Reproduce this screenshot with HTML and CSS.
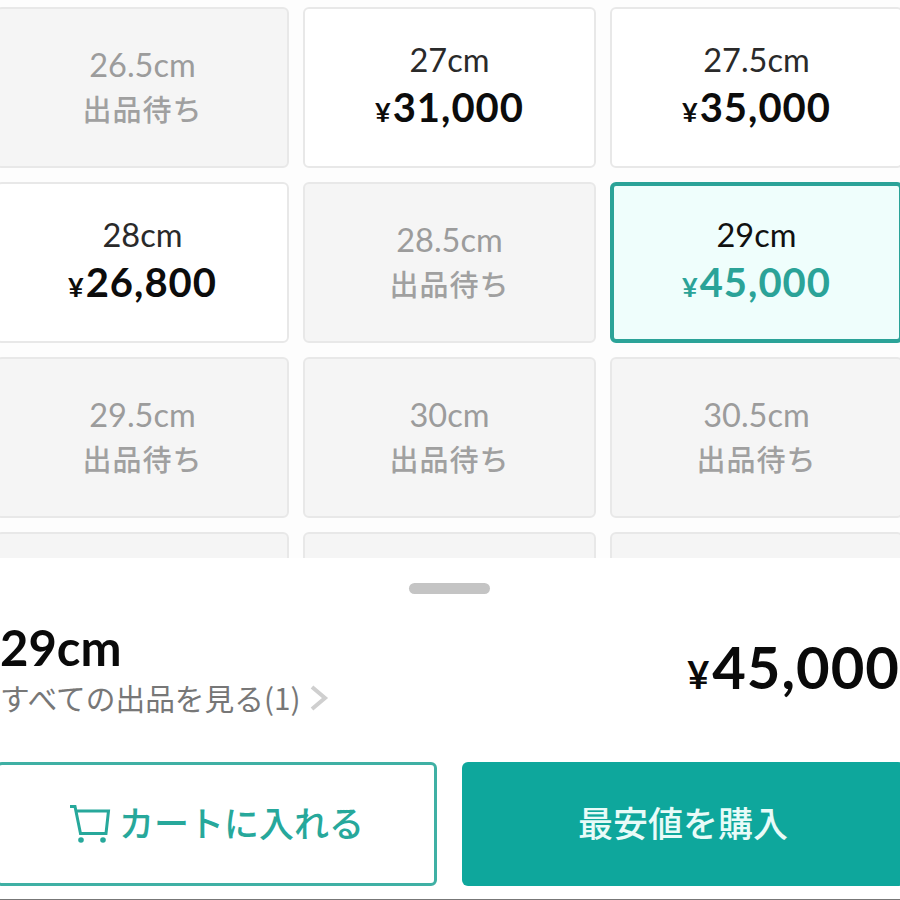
FILE: index.html
```html
<!DOCTYPE html>
<html lang="ja">
<head>
<meta charset="utf-8">
<title>サイズ選択</title>
<link rel="stylesheet" href="styles.css">
</head>
<body>
<div class="page">
  <div class="grid-area">
    <div class="grid">
      <div class="card off"><div class="size">26.5cm</div><div class="wait">出品待ち</div></div>
      <div class="card"><div class="size">27cm</div><div class="price"><span class="yen">¥</span>31,000</div></div>
      <div class="card"><div class="size">27.5cm</div><div class="price"><span class="yen">¥</span>35,000</div></div>
      <div class="card"><div class="size">28cm</div><div class="price"><span class="yen">¥</span>26,800</div></div>
      <div class="card off"><div class="size">28.5cm</div><div class="wait">出品待ち</div></div>
      <div class="card selected"><div class="size">29cm</div><div class="price"><span class="yen">¥</span>45,000</div></div>
      <div class="card off"><div class="size">29.5cm</div><div class="wait">出品待ち</div></div>
      <div class="card off"><div class="size">30cm</div><div class="wait">出品待ち</div></div>
      <div class="card off"><div class="size">30.5cm</div><div class="wait">出品待ち</div></div>
      <div class="card off"></div>
      <div class="card off"></div>
      <div class="card off"></div>
    </div>
  </div>
  <div class="sheet">
    <div class="handle"></div>
    <div class="summary">
      <div class="summary-left">
        <div class="sel-size">29cm</div>
        <div class="all-link">すべての出品を見る(1)
          <svg class="chev" width="20" height="28" viewBox="0 0 20 28" aria-hidden="true"><path d="M3 3 L16 14 L3 25" fill="none" stroke="#cfcfcf" stroke-width="4"/></svg>
        </div>
      </div>
      <div class="sel-price"><span class="yen-lg">¥</span>45,000</div>
    </div>
    <div class="actions">
      <div class="btn btn-cart">
        <svg class="cart" width="42" height="42" viewBox="0 0 42 42" aria-hidden="true"><path d="M1 3.5 H6 L11.5 30.5 H37 L39.5 8 H7" fill="none" stroke="#27a89b" stroke-width="3"/><circle cx="12" cy="37" r="2.8" fill="#27a89b"/><circle cx="34" cy="37" r="2.8" fill="#27a89b"/></svg>
        <span>カートに入れる</span>
      </div>
      <div class="btn btn-buy">最安値を購入</div>
    </div>
  </div>
</div>
</body>
</html>
```
FILE: styles.css
```css
* { box-sizing: border-box; }
html, body { margin: 0; padding: 0; background: #fff; }
body { font-family: "Lato", "Noto Sans CJK JP", sans-serif; color: #111; }
.page { width: 900px; height: 900px; overflow: hidden; display: flex; flex-direction: column; border-bottom: 1px solid #777; }
.grid-area { height: 558px; overflow: hidden; background: #fdfdfd; flex: none; }
.grid { display: grid; grid-template-columns: repeat(3, 293px); grid-auto-rows: 161px; gap: 14px; margin-left: -4px; padding-top: 7px; }
.card { background: #fff; border: 2px solid #e8e8e8; border-radius: 6px; display: flex; flex-direction: column; align-items: center; justify-content: center; }
.size { font-size: 32.5px; line-height: 40px; color: #2a2a2a; }
.price { font-size: 40px; line-height: 48px; font-weight: 700; color: #0c0c0c; letter-spacing: 1px; margin-top: 3px; }
.yen { font-size: 27px; font-weight: 700; margin-right: 1px; }
.wait { font-size: 29px; line-height: 44px; font-weight: 500; color: #a0a0a0; font-family: "Noto Sans CJK JP", sans-serif; letter-spacing: 1px; margin-top: 1px; }
.off { background: #f5f5f5; }
.off .size { color: #9c9c9c; }
.selected { background: #effefc; border: 4px solid #2ba398; }
.selected .size { color: #111; }
.selected .price { color: #2ba398; }
.sheet { flex: 1; background: #fff; display: flex; flex-direction: column; }
.handle { width: 81px; height: 11px; border-radius: 6px; background: #c4c4c4; margin: 25px 0 0 409px; flex: none; }
.summary { display: flex; justify-content: space-between; align-items: flex-start; margin-top: 28px; height: 140px; }
.sel-size { font-size: 49px; line-height: 50px; font-weight: 700; color: #0a0a0a; }
.all-link { display: flex; align-items: center; gap: 9px; font-size: 29.7px; line-height: 40px; color: #777; margin-top: 6px; font-family: "Noto Sans CJK JP", sans-serif; }
.sel-price { font-size: 58px; line-height: 68px; font-weight: 700; color: #0a0a0a; letter-spacing: 1px; margin-top: 11px; }
.yen-lg { font-size: 38px; margin-right: 2px; }
.actions { display: grid; grid-template-columns: 437px 442px; gap: 25px; height: 124px; }
.btn { height: 124px; border-radius: 6px; display: flex; align-items: center; justify-content: center; font-size: 35px; font-family: "Noto Sans CJK JP", sans-serif; font-weight: 500; padding-bottom: 6px; }
.btn-cart { margin-left: -4px; width: 441px; border: 3px solid #3fb0a4; color: #27a89b; gap: 8px; }
.cart { margin-top: 5px; }
.btn-buy { background: #0ea79c; color: #e8fbf8; }
```
